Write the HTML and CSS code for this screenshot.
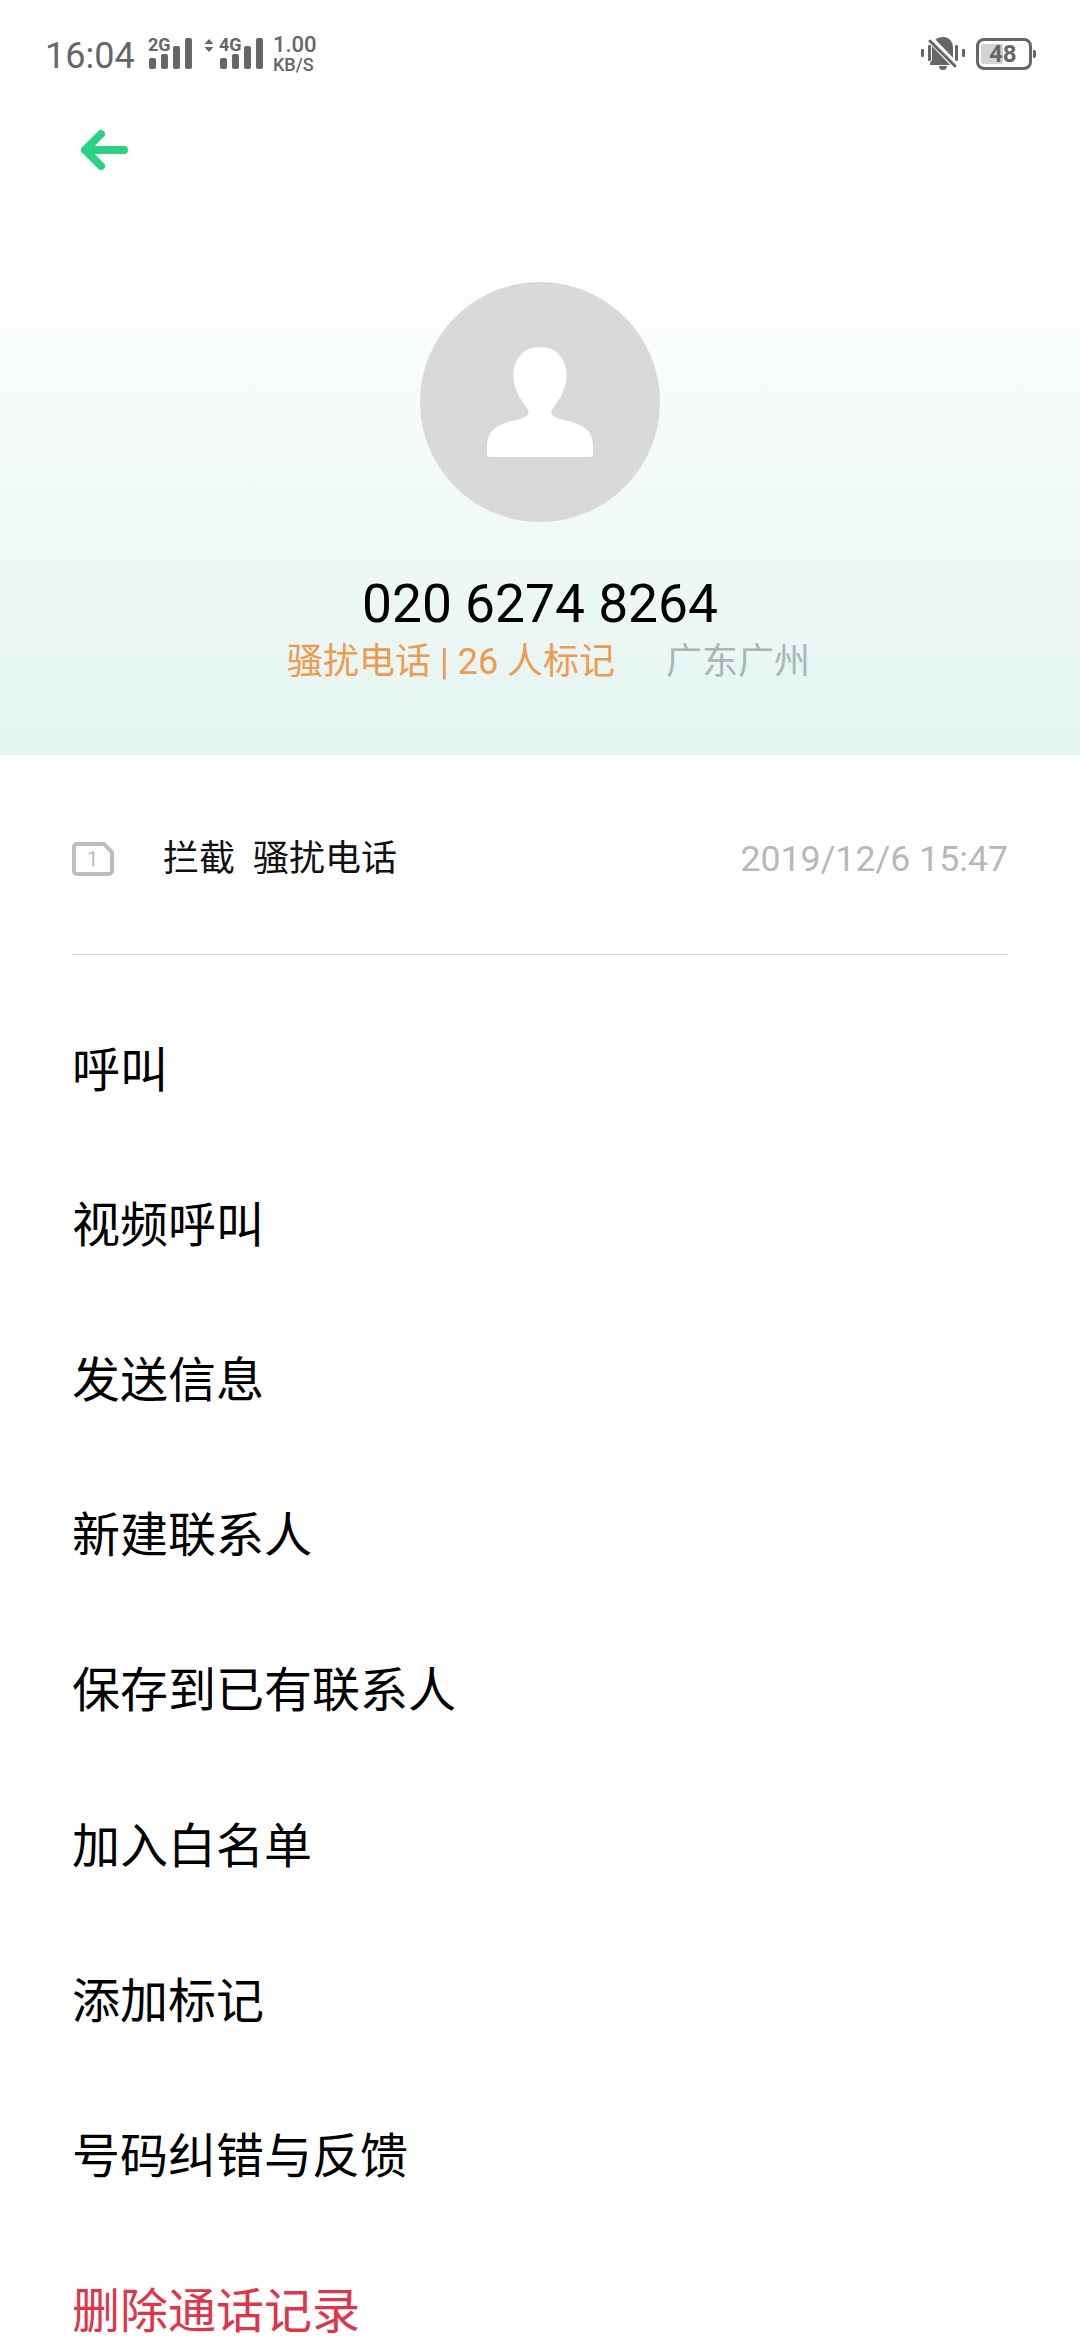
FILE: index.html
```html
<!DOCTYPE html>
<html lang="zh-CN">
<head>
<meta charset="utf-8">
<title>通话详情</title>
<link rel="stylesheet" href="styles.css">
</head>
<body>
<div class="page">
  <header class="hero">
    <div class="status">
      <span class="time">16:04</span>
      <div class="sig sig-a">
        <span class="net">2G</span>
        <svg class="bars" width="45" height="31" viewBox="0 0 45 31"><rect x="1" y="20" width="7" height="11" rx="2"/><rect x="13" y="16" width="7" height="15" rx="2"/><rect x="25" y="8" width="7" height="23" rx="2"/><rect x="37" y="0" width="7" height="31" rx="2"/></svg>
      </div>
      <svg class="arrows" width="10" height="13" viewBox="0 0 10 13"><path d="M5 0l4.500 5H.5zM5 13L.5 8h9z"/></svg>
      <div class="sig sig-b">
        <span class="net">4G</span>
        <svg class="bars" width="45" height="31" viewBox="0 0 45 31"><rect x="1" y="20" width="7" height="11" rx="2"/><rect x="13" y="16" width="7" height="15" rx="2"/><rect x="25" y="8" width="7" height="23" rx="2"/><rect x="37" y="0" width="7" height="31" rx="2"/></svg>
      </div>
      <div class="speed"><span class="sp1">1.00</span><span class="sp2">KB/S</span></div>
      <svg class="bell" width="46" height="36" viewBox="0 0 46 36"><rect x="1" y="14" width="3" height="8" rx="1"/><rect x="8" y="10" width="3" height="16" rx="1"/><rect x="35" y="10" width="3" height="16" rx="1"/><rect x="42" y="14" width="3" height="8" rx="1"/><path d="M23 2c6 0 10 4 10 11v17H10v-2l2-3V12c0-6 5-10 11-10z"/><path d="M19 31h8c0 3-2 4-4 4s-4-1-4-4z"/><path d="M11 5l24 25" stroke="#fff" stroke-width="7"/><path d="M10 6l25 25" stroke="#666" stroke-width="3" stroke-linecap="round"/></svg>
      <div class="batt"><span class="batt-fill"></span><span class="batt-num">48</span><span class="batt-nub"></span></div>
    </div>
    <div class="toolbar">
      <svg class="back" width="48" height="40" viewBox="0 0 48 40"><path d="M5 20h39M21 4L5 20l16 16" fill="none" stroke="#2bd183" stroke-width="8" stroke-linecap="round" stroke-linejoin="round"/></svg>
    </div>
    <div class="avatar">
      <svg width="106" height="110" viewBox="0 0 108 112"><path d="M54 0c17 0 27 12 27 29 0 14-7 24-13 32-4 6-3 9 3 11 8 3 20 4 28 10 7 5 9 12 9 20v7c0 2-1 3-3 3H3c-2 0-3-1-3-3v-7c0-8 2-15 9-20 8-6 20-7 28-10 6-2 7-5 3-11C34 53 27 43 27 29 27 12 37 0 54 0z" fill="#fff"/></svg>
    </div>
    <h1 class="number">020 6274 8264</h1>
    <p class="tags"><span class="spam">骚扰电话 | 26 人标记</span><span class="place">广东广州</span></p>
  </header>
  <section class="record">
    <div class="record-row">
      <span class="sim"><svg width="42" height="34" viewBox="0 0 42 34"><path d="M5 2h27l8 8v19a3 3 0 0 1-3 3H5a3 3 0 0 1-3-3V5a3 3 0 0 1 3-3z" fill="none" stroke="#bdbdbd" stroke-width="4"/></svg><span class="sim-n">1</span></span>
      <span class="rec-text">拦截</span>
      <span class="rec-text rec-second">骚扰电话</span>
      <span class="rec-date">2019/12/6 15:47</span>
    </div>
  </section>
  <ul class="menu">
    <li>呼叫</li>
    <li>视频呼叫</li>
    <li>发送信息</li>
    <li>新建联系人</li>
    <li>保存到已有联系人</li>
    <li>加入白名单</li>
    <li>添加标记</li>
    <li>号码纠错与反馈</li>
    <li class="danger">删除通话记录</li>
  </ul>
</div>
</body>
</html>
```
FILE: styles.css
```css
* { box-sizing: border-box; }
html, body { margin: 0; padding: 0; background: #fff; }
body { font-family: Roboto, "Noto Sans CJK SC", sans-serif; color: #000; }
.page { width: 1080px; height: 2340px; overflow: hidden; background: #fff; }

.hero {
  height: 755px;
  background: linear-gradient(180deg, #fff 0, #fff 240px, #e4f5f1 100%);
  display: flex;
  flex-direction: column;
  align-items: center;
}
.status {
  width: 100%;
  height: 100px;
  padding: 0 45px;
  display: flex;
  align-items: flex-start;
  color: #666;
}
.time { font-size: 36px; font-weight: 400; line-height: 42px; margin-top: 35px; width: 103px; }
.sig { position: relative; width: 45px; height: 31px; margin-top: 38px; }
.sig .bars { display: block; fill: #666; }
.net {
  position: absolute; left: 0; top: -2px;
  font-size: 18px; font-weight: 700; line-height: 17px;
  background: #fff; padding-bottom: 1px;
}
.arrows { fill: #666; margin: 39px 5px 0 11px; }
.speed { display: flex; flex-direction: column; margin: 34px 0 0 9px; width: 0; flex: 1; }
.sp1 { font-size: 22px; font-weight: 500; line-height: 22px; }
.sp2 { font-size: 18px; font-weight: 500; line-height: 17px; }
.bell { fill: #666; margin: 35px 10px 0 0; }
.batt {
  position: relative; width: 56px; height: 32px; margin: 38px 3px 0 0;
  border: 3px solid #666; border-radius: 8px;
}
.batt-fill { position: absolute; left: 2px; top: 3px; width: 22px; height: 20px; background: #d4d4d4; border-radius: 2px; }
.batt-num { position: absolute; left: 10px; top: 0; font-size: 24px; font-weight: 700; line-height: 26px; }
.batt-nub { position: absolute; right: -7px; top: 9px; width: 3px; height: 8px; background: #666; border-radius: 0 2px 2px 0; }

.toolbar { width: 100%; height: 82px; padding: 30px 0 0 80px; }
.back { display: block; }
.avatar {
  width: 240px; height: 240px; margin-top: 100px;
  border-radius: 50%; background: #d9d9d9;
  display: flex; justify-content: center; padding-top: 65px;
}
.avatar svg { display: block; }
.number { margin: 50px 0 0; font-size: 53.300px; font-weight: 400; line-height: 64px; white-space: nowrap; }
.tags { margin: 2px 0 0; font-size: 36px; line-height: 48px; display: flex; width: 100%; padding-left: 287px; }
.spam { color: #f09a4e; }
.place { color: #aab6b3; margin-left: 51px; }

.record { padding: 0 72px; }
.record-row {
  height: 200px;
  border-bottom: 1px solid #dcdcdc;
  display: flex; align-items: center;
  padding-top: 8px;
  font-size: 36px;
}
.sim { position: relative; width: 42px; height: 34px; margin-right: 49px; }
.sim svg { display: block; }
.sim-n { position: absolute; left: 15px; top: 6px; font-size: 20px; line-height: 22px; color: #bdbdbd; }
.rec-text { color: #111; line-height: 48px; }
.rec-second { margin-left: 18px; }
.rec-date { margin-left: auto; color: #b8b8b8; font-size: 35.700px; }

.menu { list-style: none; margin: 0; padding: 38px 72px 0; }
.menu li { height: 155.200px; display: flex; align-items: center; font-size: 48px; line-height: 48px; color: #000; }
.menu .danger { height: 110px; align-items: flex-start; padding-top: 53px; color: #e0344a; }
```
